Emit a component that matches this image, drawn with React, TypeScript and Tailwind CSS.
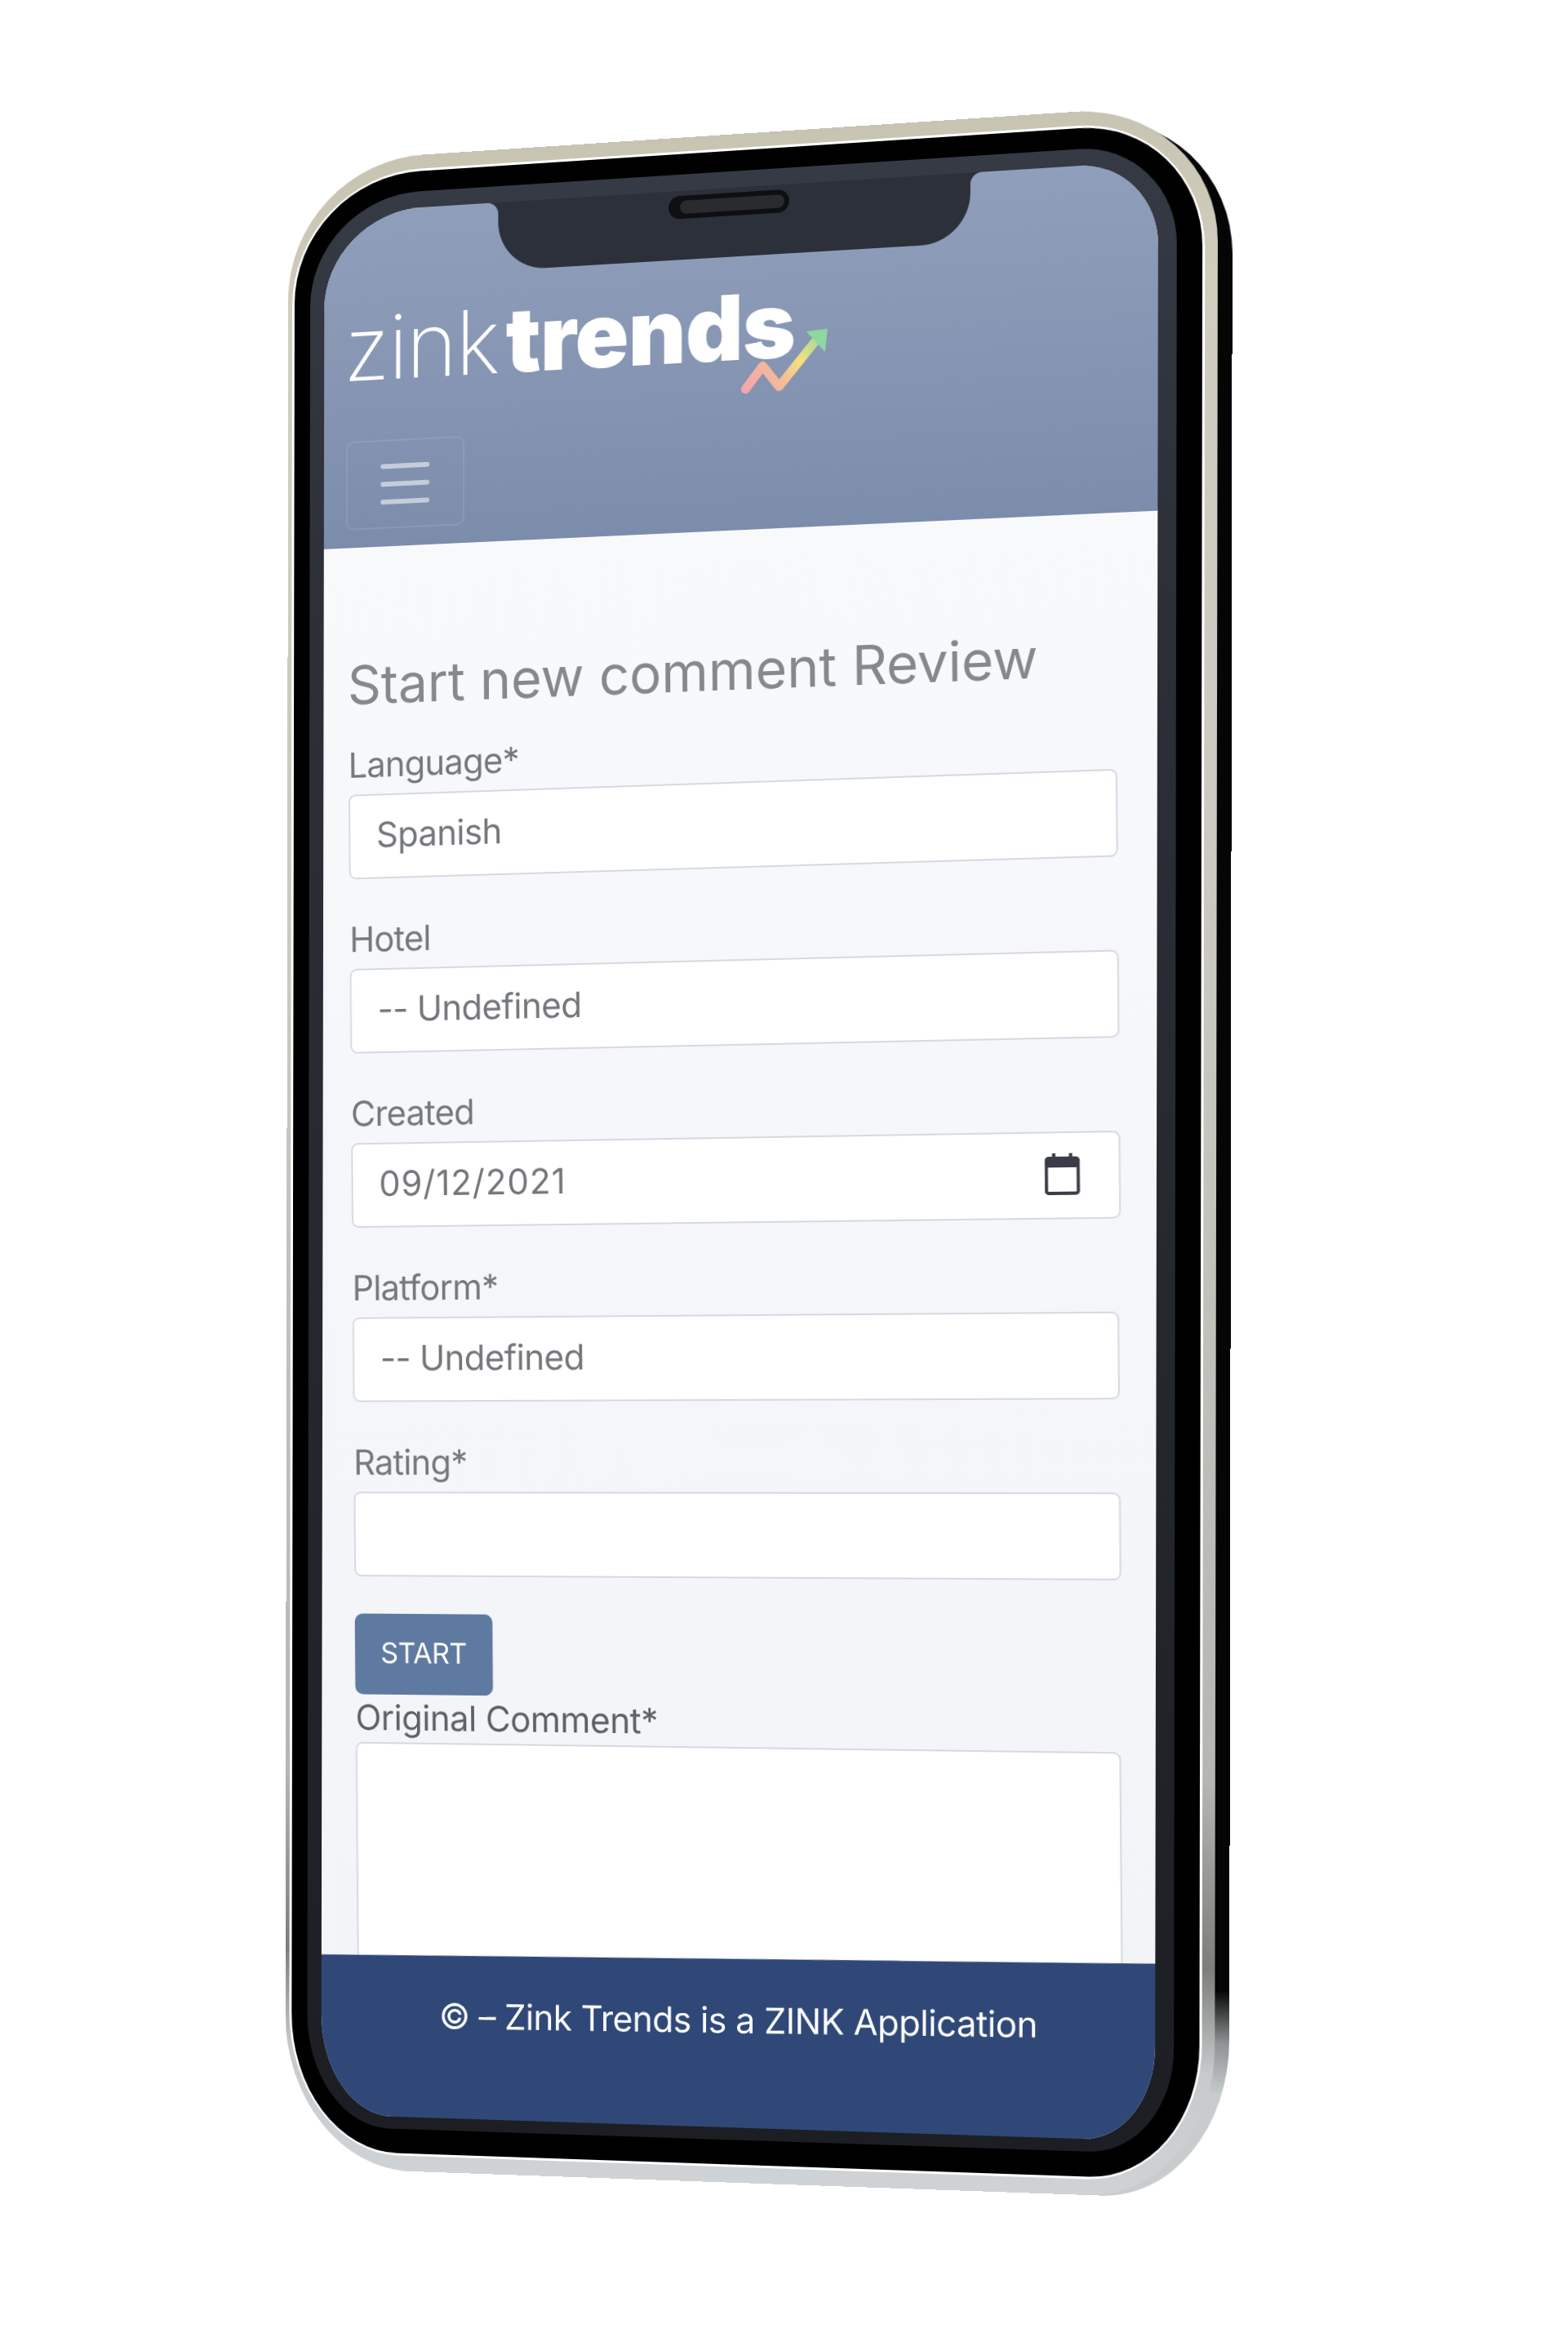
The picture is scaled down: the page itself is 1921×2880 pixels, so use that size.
import React from "react";

const W = 1022;
const H = 2360;
const quad = [
  [397.5, 261.5],
  [1419, 197],
  [1415, 2623],
  [393.5, 2590],
];

function homography(): string {
  const [[x0, y0], [x1, y1], [x2, y2], [x3, y3]] = quad;
  const dx1 = x1 - x2, dx2 = x3 - x2, sx = x0 - x1 + x2 - x3;
  const dy1 = y1 - y2, dy2 = y3 - y2, sy = y0 - y1 + y2 - y3;
  const den = dx1 * dy2 - dx2 * dy1;
  const g = (sx * dy2 - dx2 * sy) / den;
  const h = (dx1 * sy - sx * dy1) / den;
  const a = x1 - x0 + g * x1, b = x3 - x0 + h * x3;
  const d = y1 - y0 + g * y1, e = y3 - y0 + h * y3;
  return `matrix3d(${a / W},${d / W},0,${g / W},${b / H},${e / H},0,${h / H},0,0,1,0,${x0},${y0},0,1)`;
}

function Calendar() {
  return (
    <svg viewBox="0 0 42 50" className="w-[42px] h-[50px] text-[#3a3d47]" fill="none">
      <rect x="2" y="6" width="38" height="42" rx="3" stroke="currentColor" strokeWidth="4" />
      <rect x="2" y="6" width="38" height="11" fill="currentColor" />
      <rect x="9" y="0" width="4" height="8" fill="currentColor" />
      <rect x="29" y="0" width="4" height="8" fill="currentColor" />
    </svg>
  );
}

function TrendArrow() {
  return (
    <svg viewBox="0 0 108 76" className="absolute left-[496px] top-[62px] w-[108px] h-[76px]" fill="none">
      <defs>
        <linearGradient id="trend" x1="4" y1="70" x2="105" y2="5" gradientUnits="userSpaceOnUse">
          <stop offset="0" stopColor="#f3a7ad" />
          <stop offset="0.35" stopColor="#f4b99a" />
          <stop offset="0.62" stopColor="#f5e07c" />
          <stop offset="1" stopColor="#8ed7a2" />
        </linearGradient>
      </defs>
      <path d="M6 69 L27 42 L47 68 L94 12" stroke="url(#trend)" strokeWidth="11" strokeLinecap="round" strokeLinejoin="round" />
      <path d="M80 3 L106 1 L103 29 Z" fill="#8ed7a2" />
    </svg>
  );
}

function Field({ label, value, icon, wide, mt, narrow }: { label: string; value?: string; icon?: boolean; wide?: boolean; mt: string; narrow?: boolean }) {
  return (
    <div className={mt}>
      <div className="h-[50px] leading-[50px] text-[43px] tracking-[-0.8px] text-[#75787b] font-normal">{label}</div>
      <div className={`mt-[12px] h-[105px] flex items-center justify-between pl-[33px] pr-[46px] pb-[4px] bg-white border-2 border-[#d6d9e1] rounded-[9px] text-[43px] tracking-[-0.6px] text-[#73767a] ${narrow ? "mr-[3px]" : ""}`}>
        <span className={wide ? "tracking-[1px]" : ""}>{value}</span>
        {icon ? <Calendar /> : null}
      </div>
    </div>
  );
}

export default function App() {
  return (
    <div className="relative w-[1921px] h-[2880px] overflow-hidden bg-white font-['Inter',sans-serif]">
      <div className="relative w-[1022px] h-[2360px] origin-top-left" style={{ transform: homography() }}>
        {/* body layers */}
        <div className="absolute left-[-20px] right-[-87px] top-[-55px] bottom-[-67px] rounded-[200px_170px_150px_170px/190px_170px_190px_190px] bg-[linear-gradient(180deg,#050505_0%,#050505_90%,#8f9294_92.5%,#c9cccd_95%,#c9cccd_100%)]" />
        <div className="absolute left-[-46px] right-[-70px] top-[-65px] bottom-[-67px] rounded-[172px_170px_150px_160px/168px_165px_180px_190px] bg-[linear-gradient(180deg,#c8c4b2_0%,#d0cdbf_8%,#c9c9c2_40%,#b5b7b2_80%,#7d7e79_89%,#c6cacc_94%,#cfd3d6_100%)]" />
        <div className="absolute left-[-41px] right-[-55px] top-[-48px] bottom-[-48px] rounded-[165px_150px_135px_140px/160px_155px_165px_175px] bg-white" />
        <div className="absolute left-[-38px] right-[-52px] top-[-45px] bottom-[-45px] rounded-[160px_145px_130px_135px/155px_150px_160px_170px] bg-black" />
        <div className="absolute left-[-18px] right-[-22px] top-[-20px] bottom-[-15px] rounded-[140px_115px_100px_105px/135px_120px_125px_140px] bg-[linear-gradient(180deg,#363a44_0%,#2d3039_20%,#1c1e23_100%)]" />

        {/* screen */}
        <div className="relative w-full h-full flex flex-col overflow-hidden rounded-[125px_95px_85px_90px/120px_100px_113px_125px] bg-[#f4f5f9]">
          <header className="h-[417px] shrink-0 px-[30px] pt-[115px] bg-[linear-gradient(180deg,#8f9fbb_0%,#7c8cab_100%)]">
            <div className="relative ml-[-5px] h-[110px] leading-[110px] text-[110px] text-white whitespace-nowrap">
              <span className="font-extralight tracking-[-2px]">zink</span>
              <span className="ml-[9px] font-black tracking-[-0.7px]">trends</span>
              <TrendArrow />
            </div>
            <button className="ml-[-2px] mt-[60px] w-[150px] h-[110px] flex flex-col items-center justify-center gap-[16px] rounded-[10px] border-2 border-white/10">
              <span className="block w-[62px] h-[6px] rounded-full bg-[#c5ccda]" />
              <span className="block w-[62px] h-[6px] rounded-full bg-[#c5ccda]" />
              <span className="block w-[62px] h-[6px] rounded-full bg-[#c5ccda]" />
            </button>
          </header>

          <main className="flex-1 min-h-0 mb-[-12px] pl-[29px] pr-[50px] pt-[130px] overflow-hidden origin-top-left [transform:skewX(0.55deg)] bg-[linear-gradient(180deg,#f8f9fb_0%,#f3f4f8_100%)]">
            <h1 className="h-[80px] leading-[80px] text-[66px] font-normal text-[#85888c] whitespace-nowrap">
              Start new comment Review
            </h1>
            <Field mt="mt-[34px]" label="Language*" value="Spanish" />
            <Field mt="mt-[49px]" label="Hotel" value="-- Undefined" />
            <Field mt="mt-[49px]" label="Created" value="09/12/2021" wide icon />
            <Field mt="mt-[49px]" label="Platform*" value="-- Undefined" narrow />
            <Field mt="mt-[49px]" label="Rating*" narrow />
            <button className="mt-[46px] block w-[174px] h-[100px] pb-[4px] rounded-[10px] bg-[#5f7aa0] text-white text-[35px] tracking-[-0.5px]">START</button>
            <div className="mt-[2px] h-[52px] leading-[52px] text-[43px] tracking-[-0.5px] text-[#5d6064]">Original Comment*</div>
            <div className="mt-[5px] mr-[5px] h-[400px] bg-white border-2 border-[#d6d9e1] rounded-t-[9px]" />
          </main>

          <footer className="relative h-[225px] mb-[-20px] shrink-0 pt-[42px] pl-[10px] bg-[#2f4877] text-center text-white text-[43px] tracking-[-0.65px] origin-center [transform:skewY(-0.73deg)]">
            © – Zink Trends is a ZINK Application
          </footer>

          {/* notch */}
          <div className="absolute left-[220px] top-0 w-[579px] h-[84px] rounded-b-[60px] bg-[#2c303b]">
            <div className="absolute left-[-14px] top-0 w-[14px] h-[14px] bg-[radial-gradient(circle_at_0%_100%,transparent_13.5px,#2c303b_14.5px)]" />
            <div className="absolute right-[-14px] top-0 w-[14px] h-[14px] bg-[radial-gradient(circle_at_100%_100%,transparent_13.5px,#2c303b_14.5px)]" />
            <div className="absolute left-[212px] top-[6px] w-[148px] h-[28px] rounded-full bg-[#0d0f13] p-[6px] pl-[14px]">
              <div className="w-full h-full rounded-full bg-[#2a2b2f]" />
            </div>
          </div>
        </div>
      </div>
    </div>
  );
}
